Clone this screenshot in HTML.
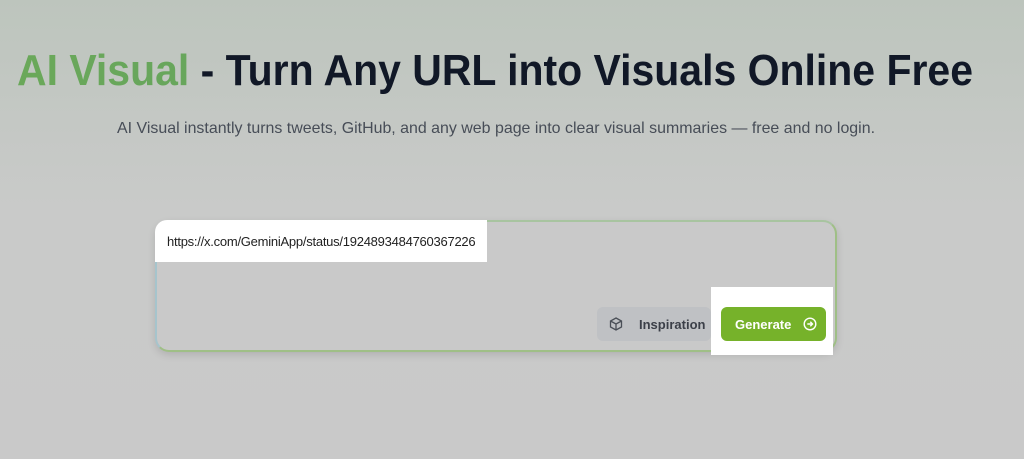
<!DOCTYPE html>
<html><head><style>
html,body{margin:0;width:1024px;height:459px;overflow:hidden;background:linear-gradient(#bdc5bd,#c9cac9 45%,#c9c9c9);font-family:"Liberation Sans",sans-serif;}
svg{position:absolute;left:0;top:0}
.card{position:absolute;left:155px;top:220px;width:678px;height:128px;border-radius:14px;border:2px solid #9fbf86;border-left-color:#a6c4cc;border-top-color:#a8c4a0;background:#c9c9c9;box-shadow:0 3px 8px rgba(0,0,0,.12);}
.url{position:absolute;left:155px;top:220px;width:332px;height:42px;background:#fff;border-top-left-radius:12px;}
.url span{position:absolute;left:12px;top:14px;font-size:13px;color:#222;letter-spacing:-.25px}
.hl{position:absolute;left:711px;top:287px;width:122px;height:68px;background:#fff}
.btn{position:absolute;top:307px;height:34px;border-radius:6px;font-size:13px;font-weight:bold;display:flex;align-items:center;}
.insp{left:597px;width:114px;background:#bfc1c4;color:#3b3f48}
.gen{left:721px;width:105px;background:#76b22a;color:#fff}
</style></head><body>
<svg width="1024" height="459">
<defs><linearGradient id="g" x1="0" x2="1"><stop offset="0" stop-color="#6aa85a"/><stop offset="1" stop-color="#5d9c66"/></linearGradient></defs>
<text x="17" y="85" font-size="44" font-weight="bold" fill="#111827" textLength="956" lengthAdjust="spacingAndGlyphs" font-family="Liberation Sans"><tspan fill="url(#g)">AI Visual</tspan> - Turn Any URL into Visuals Online Free</text>
<text x="117" y="133" font-size="16" fill="#474d57" textLength="758" lengthAdjust="spacingAndGlyphs" font-family="Liberation Sans">AI Visual instantly turns tweets, GitHub, and any web page into clear visual summaries — free and no login.</text>
</svg>
<div class="card"></div>
<div class="url"><span>https://x.com/GeminiApp/status/1924893484760367226</span></div>
<div class="hl"></div>
<div class="btn insp"><svg style="position:static;margin:0 12px 0 12px" width="14" height="14" viewBox="0 0 14 14" fill="none" stroke="#4a4f57" stroke-width="1.3"><path d="M7 1L12.5 4V10L7 13L1.5 10V4Z M1.5 4L7 7L12.5 4 M7 7V13"/></svg><span style="margin-left:4px">Inspiration</span></div>
<div class="btn gen"><span style="margin-left:14px">Generate</span><svg style="position:static;margin-left:12px" width="14" height="14" viewBox="0 0 14 14" fill="none" stroke="#fff" stroke-width="1.4"><circle cx="7" cy="7" r="5.8"/><path d="M4.3 7H9.5M7.3 4.8L9.5 7L7.3 9.2"/></svg></div>
</body></html>
